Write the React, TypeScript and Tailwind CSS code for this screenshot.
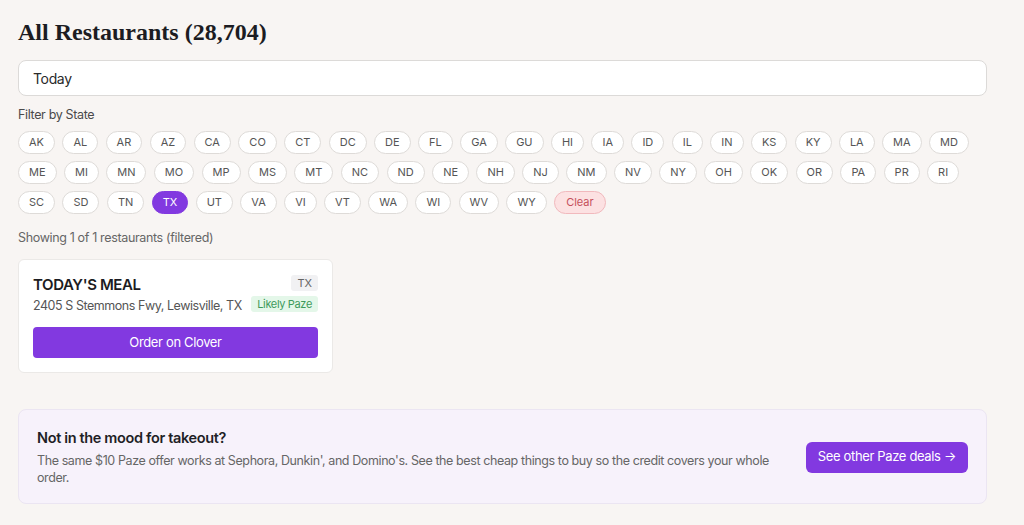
const states = [
  'AK', 'AL', 'AR', 'AZ', 'CA', 'CO', 'CT', 'DC', 'DE', 'FL', 'GA', 'GU', 'HI', 'IA', 'ID', 'IL', 'IN', 'KS', 'KY', 'LA', 'MA', 'MD',
  'ME', 'MI', 'MN', 'MO', 'MP', 'MS', 'MT', 'NC', 'ND', 'NE', 'NH', 'NJ', 'NM', 'NV', 'NY', 'OH', 'OK', 'OR', 'PA', 'PR', 'RI',
  'SC', 'SD', 'TN', 'TX', 'UT', 'VA', 'VI', 'VT', 'WA', 'WI', 'WV', 'WY'
]

const selected = 'TX'

export default function App() {
  return (
    <div className="min-h-[525px] bg-[#f8f5f3] pt-[18px] pr-[37px] pb-5 pl-[18px] font-['Inter',sans-serif] tracking-[-0.35px] text-[#222]">
      <h1 className="font-['Liberation_Serif',serif] text-[24px] leading-7 font-bold tracking-normal text-[#1c1c22]">
        All Restaurants (28,704)
      </h1>

      <input
        readOnly
        value="Today"
        className="mt-[14px] block h-9 w-full rounded-lg border border-[#dcdad8] bg-white px-[14px] text-[14px] text-[#2a2a2a] outline-none"
      />

      <p className="mt-[11px] text-[12.5px] leading-4 text-[#4a4a4a]">Filter by State</p>

      <div className="mt-[8px] flex flex-wrap gap-x-[7.4px] gap-y-[7px]">
        {states.map((s) => (
          <button
            key={s}
            className={
              s === selected
                ? 'h-[23px] rounded-full border border-[#8239e0] bg-[#8239e0] px-[10px] text-[11px] tracking-normal text-white'
                : 'h-[23px] rounded-full border border-[#dedbd8] bg-white px-[10px] text-[11px] tracking-normal text-[#555]'
            }
          >
            {s}
          </button>
        ))}
        <button className="h-[23px] rounded-full border border-[#f1b9bd] bg-[#fce1e2] px-[11px] text-[11px] tracking-normal text-[#c5505c]">
          Clear
        </button>
      </div>

      <p className="mt-[16px] text-[12.5px] leading-4 text-[#666]">Showing 1 of 1 restaurants (filtered)</p>

      <div className="mt-[13px] w-[315px] rounded-md border border-[#ebe9e7] bg-white px-[14px] pt-[15px] pb-[14px]">
        <div className="flex items-start justify-between">
          <div>
            <div className="text-[15px] leading-5 font-semibold tracking-[-0.4px] text-[#1c1c22]">TODAY'S MEAL</div>
            <div className="mt-[1px] text-[12.5px] leading-5 tracking-[-0.45px] whitespace-nowrap text-[#555]">2405 S Stemmons Fwy, Lewisville, TX</div>
          </div>
          <div className="flex flex-col items-end gap-[5px]">
            <span className="rounded-[3px] bg-[#f1f1f3] px-[6px] text-[11px] leading-4 tracking-normal text-[#666]">TX</span>
            <span className="rounded-[3px] bg-[#e4f7e9] px-[6px] text-[11px] leading-4 whitespace-nowrap text-[#3e9a5b]">Likely Paze</span>
          </div>
        </div>
        <button className="mt-[11px] h-[31px] w-full rounded-[4px] bg-[#8239e0] text-[13px] text-white">
          Order on Clover
        </button>
      </div>

      <div className="mt-[36px] flex items-center justify-between rounded-lg border border-[#ebe5f2] bg-[#f7f2fb] pt-[18px] pr-[18px] pb-[17px] pl-[18px]">
        <div className="w-[735px]">
          <div className="text-[14.5px] leading-5 font-semibold text-[#1f1f26]">Not in the mood for takeout?</div>
          <p className="mt-[4px] text-[12.5px] leading-[17px] tracking-[-0.4px] text-[#666]">
            The same $10 Paze offer works at Sephora, Dunkin', and Domino's. See the best cheap things to buy so the credit covers your whole order.
          </p>
        </div>
        <button className="h-[31px] rounded-md bg-[#8239e0] px-[12px] text-[13px] text-white">See other Paze deals →</button>
      </div>
    </div>
  )
}
